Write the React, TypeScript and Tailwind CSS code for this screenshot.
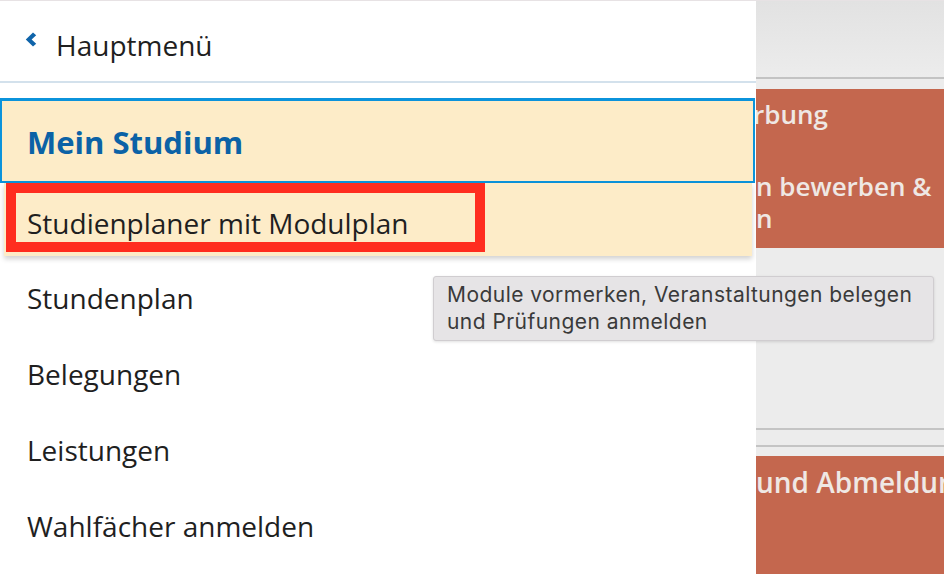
import React from 'react';

const items = ['Stundenplan', 'Belegungen', 'Leistungen', 'Wahlfächer anmelden'];

const Chevron: React.FC = () => (
  <svg width="12" height="15" viewBox="0 0 12 15" className="mt-[5px] shrink-0">
    <path d="M8 0.5 L11.2 3.2 L6.6 7.5 L11.2 11.8 L8 14.5 L0.8 7.5 Z" fill="#0f64aa" strokeLinejoin="round" />
  </svg>
);

export default function App() {
  return (
    <div
      className="relative flex h-[574px] w-[944px] overflow-hidden border-t border-[#e7e2e4] bg-[#ececec] text-[#1f1f1f]"
      style={{ fontFamily: '"Open Sans", "Noto Sans", sans-serif' }}
    >
      {/* Drawer menu */}
      <div className="relative z-10 flex w-[756px] shrink-0 flex-col bg-white">
        <div className="flex h-[82px] items-start gap-[19px] border-b-2 border-[#d3e1ec] pl-[25px] pt-[26px]">
          <Chevron />
          <span className="text-[28px] leading-[36px]">Hauptmenü</span>
        </div>

        <div className="h-[15px]" />

        <div className="h-[85px] w-[755px] border-x-2 border-b-2 border-t-[3px] border-[#0b93db] bg-[#fdecc8] pl-[25px] pt-[21px]">
          <span className="text-[31px] font-bold leading-[40px] text-[#0b62a6]">Mein Studium</span>
        </div>

        <div className="relative ml-[4px] h-[73px] w-[748px] bg-[#fdecc8] pl-[23px] pt-[22px] shadow-[0_3px_5px_rgba(0,0,0,0.18)]">
          <span className="text-[28px] leading-[36px]">Studienplaner mit Modulplan</span>
          <div className="absolute left-[2px] top-0 h-[69px] w-[479px] border-[10px] border-[#ff2d1f]" />
        </div>

        {items.map((label) => (
          <div key={label} className="h-[76px] pl-[27px] pt-[24px]">
            <span className="text-[28px] leading-[36px]">{label}</span>
          </div>
        ))}
      </div>

      {/* Page behind the menu */}
      <div className="flex min-w-0 flex-1 flex-col overflow-hidden whitespace-nowrap font-semibold text-[#efe8e4]">
        <div className="h-[78px] shrink-0 border-b-2 border-[#c3c3c3] bg-gradient-to-b from-[#e2e2e2] to-[#ececec]" />
        <div className="mt-[10px] h-[159px] shrink-0 bg-[#c4674e] pt-[9px] text-[26px] leading-[32px]">
          <div className="-ml-[3px]">rbung</div>
          <div className="mt-[40px]">n bewerben &amp;</div>
          <div>n</div>
        </div>
        <div className="mt-[180px] h-[2px] shrink-0 bg-[#c4c4c4]" />
        <div className="mt-[15px] h-[2px] shrink-0 bg-[#c4c4c4]" />
        <div className="mt-[9px] flex-1 bg-[#c4674e] pt-[9px] text-[28px] leading-[34px]">
          <div>und Abmeldung</div>
        </div>
      </div>

      {/* Tooltip */}
      <div
        className="absolute left-[433px] top-[275px] z-20 h-[65px] w-[501px] rounded-[3px] border border-[#d0cdd0] bg-[#e6e4e6] pl-[13px] pt-[4px] text-[21px] leading-[27px] tracking-[0.45px] text-[#3a3a3a] shadow-[0_1px_3px_rgba(0,0,0,0.12)]"
        style={{ fontFamily: 'Inter, "Liberation Sans", sans-serif' }}
      >
        Module vormerken, Veranstaltungen belegen
        <br />
        und Prüfungen anmelden
      </div>
    </div>
  );
}
